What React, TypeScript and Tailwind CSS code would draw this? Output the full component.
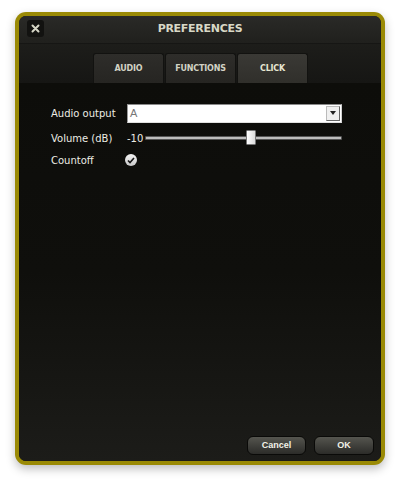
import React from "react";

const TABS = ["AUDIO", "FUNCTIONS", "CLICK"];

function Tab({ label, active }: { label: string; active?: boolean }) {
  return (
    <div
      className={
        "flex h-[30px] w-[71px] items-center justify-center rounded-t-[3px] border border-b-0 border-[#121210] text-[8px] font-bold tracking-tight " +
        (active
          ? "bg-gradient-to-b from-[#3a3935] to-[#302f2b] text-[#e6e6d2]"
          : "bg-gradient-to-b from-[#2e2d2a] to-[#262522] text-[#d2d2c4]")
      }
    >
      {label}
    </div>
  );
}

export default function App() {
  return (
    <div className="h-[483px] w-[400px] bg-white pl-[15px] pt-[12px] font-['DejaVu_Sans',sans-serif]">
      <div className="h-[453px] w-[370px] rounded-[11px] bg-[#9a8a05] p-[4px] shadow-[0_4px_10px_rgba(0,0,0,0.25)]">
        <div className="flex h-full flex-col overflow-hidden rounded-[7px] bg-[#0e0e0b]">
          {/* title bar */}
          <div className="relative flex h-[28px] shrink-0 items-center justify-center border-b border-[#161614] bg-gradient-to-b from-[#2a2a27] to-[#20201d]">
            <div className="absolute left-[8px] top-[4px] flex h-[17px] w-[17px] items-center justify-center rounded-[3px] bg-[#121210] text-[#d6d6c6]">
              <svg width="9" height="9" viewBox="0 0 9 9">
                <path d="M1.5 1.5 L7.5 7.5 M7.5 1.5 L1.5 7.5" stroke="currentColor" strokeWidth="2" strokeLinecap="round" />
              </svg>
            </div>
            <span className="text-[11px] font-bold tracking-tight text-[#d8d8c6]">PREFERENCES</span>
          </div>

          {/* tabs */}
          <div className="flex h-[39px] shrink-0 items-end justify-center gap-[1px] bg-gradient-to-b from-[#1d1d1a] to-[#161614] pl-[1px]">
            {TABS.map((t) => (
              <Tab key={t} label={t} active={t === "CLICK"} />
            ))}
          </div>

          {/* content */}
          <div className="flex flex-1 flex-col bg-gradient-to-b from-[#0d0d0a] via-[#0f0f0c] to-[#1c1c19] pl-[32px] pr-[39px] pt-[21px] text-[10px] text-[#ecece4]">
            <div className="flex h-[18px] items-center">
              <span className="w-[76px]">Audio output</span>
              <div className="flex h-[19px] flex-1 items-center border border-t-[#8a8a8a] border-l-[#9a9a9a] border-r-[#d0d0d0] border-b-[#e0e0e0] bg-white pl-[2px]">
                <span className="flex-1 text-[11px] text-[#777] font-['Liberation_Sans',sans-serif]">A</span>
                <div className="mr-[1px] flex h-[15px] w-[14px] items-center justify-center border border-[#bbb] border-b-[#666] border-r-[#666] bg-[#f0f0f0]">
                  <svg width="6" height="4" viewBox="0 0 6 4">
                    <path d="M0 0 H6 L3 4 Z" fill="#222" />
                  </svg>
                </div>
              </div>
            </div>

            <div className="mt-[8px] flex h-[16px] items-center">
              <span className="w-[76px]">Volume (dB)</span>
              <span className="w-[18px]">-10</span>
              <div className="relative h-[16px] flex-1">
                <div className="absolute left-0 right-0 top-[6px] h-[4px] rounded-[1px] border border-[#555] bg-[#bdbdbd]" />
                <div className="absolute left-[101px] top-0 h-[15px] w-[10px] rounded-[1px] border border-[#777] bg-gradient-to-r from-[#ffffff] to-[#dcdcdc]" />
              </div>
            </div>

            <div className="mt-[6px] flex h-[16px] items-center">
              <span className="w-[74px]">Countoff</span>
              <div className="flex h-[12px] w-[12px] items-center justify-center rounded-full bg-gradient-to-b from-[#f4f4f4] to-[#c8c8c8]">
                <svg width="8" height="7" viewBox="0 0 8 7">
                  <path d="M1 3.5 L3 5.5 L7 1" stroke="#151515" strokeWidth="1.6" fill="none" />
                </svg>
              </div>
            </div>

            <div className="flex-1" />

            <div className="mb-[6px] mr-[-32px] flex justify-end gap-[8px]">
              <button className="h-[19px] w-[59px] rounded-[6px] border border-[#0a0a08] bg-gradient-to-b from-[#55554f] to-[#2c2c29] text-[9px] font-bold text-[#f2f2e8] font-['Liberation_Sans',sans-serif]">
                Cancel
              </button>
              <button className="h-[19px] w-[60px] rounded-[6px] border border-[#0a0a08] bg-gradient-to-b from-[#55554f] to-[#2c2c29] text-[9px] font-bold text-[#f2f2e8] font-['Liberation_Sans',sans-serif]">
                OK
              </button>
            </div>
          </div>
        </div>
      </div>
    </div>
  );
}
